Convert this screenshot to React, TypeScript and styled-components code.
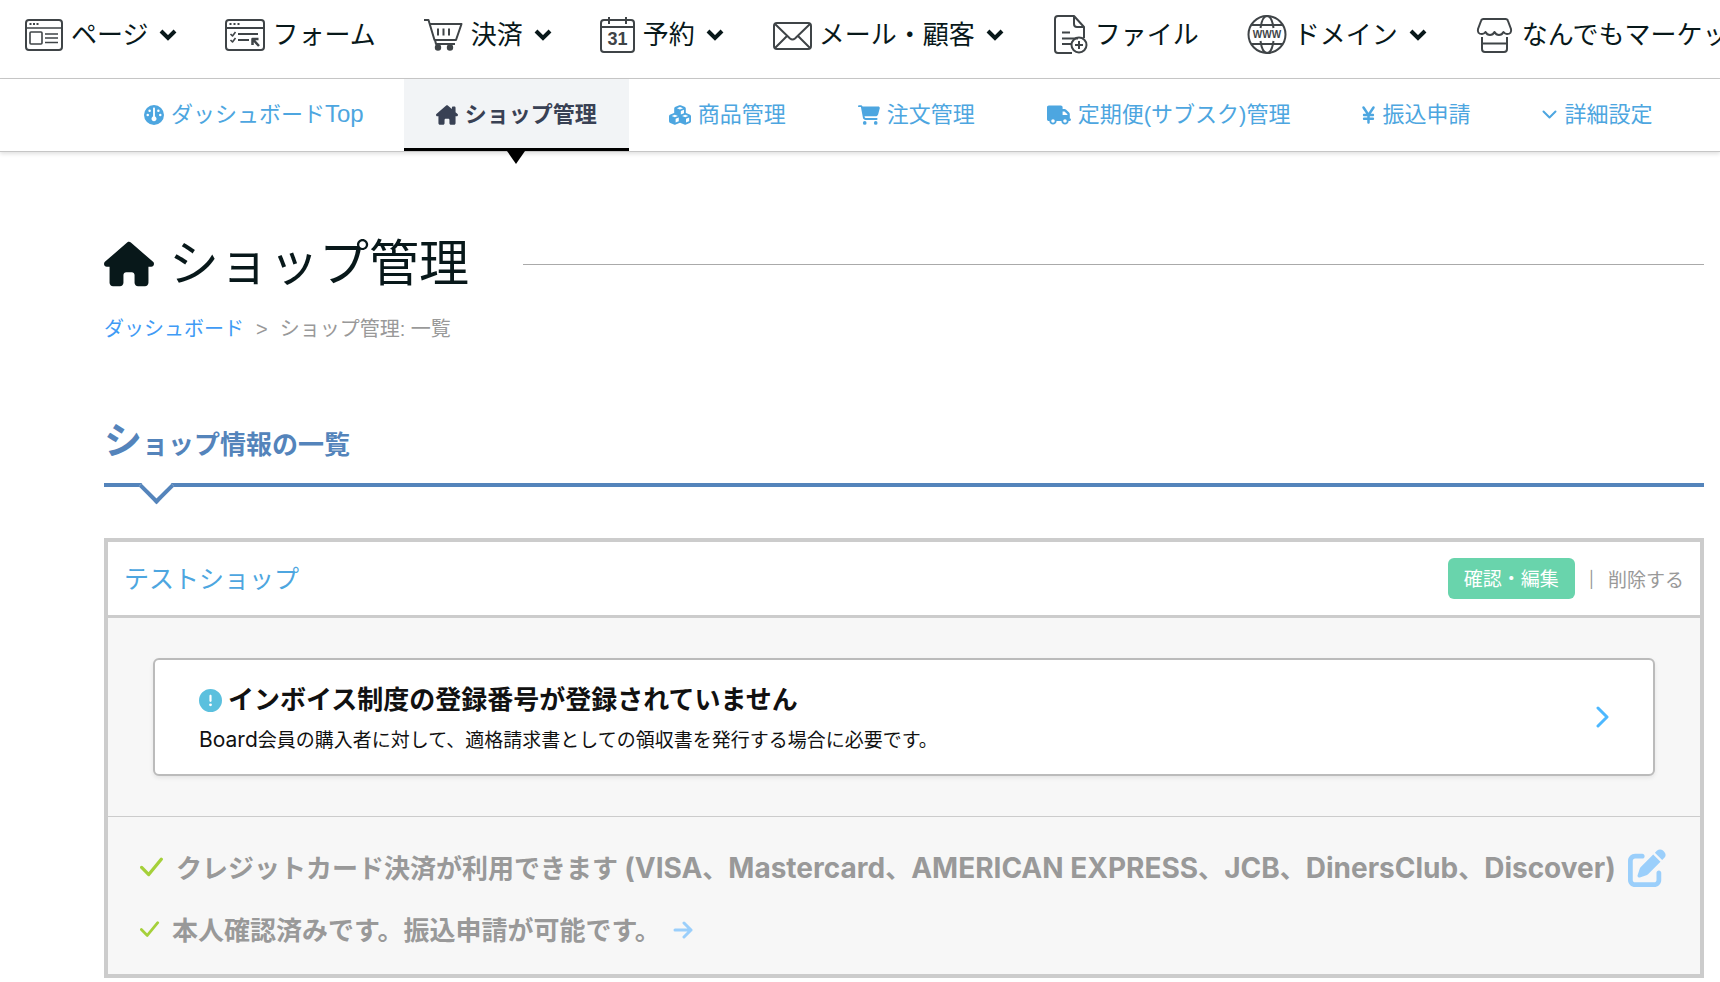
import React from 'react';
import styled, { createGlobalStyle, css } from 'styled-components';
import {
  FaCartShopping, FaCircleExclamation, FaCubes, FaGauge, FaHouse, FaHouseChimney, FaPenToSquare, FaTruck, FaYenSign,
} from 'react-icons/fa6';

const color = {
  ink: '#08181a',
  link: '#4da6e0',
  crumb: '#3f9bf5',
  heading: '#5484bb',
  muted: '#999',
  line: '#ccc',
  pale: '#9bcffb',
};

const Global = createGlobalStyle`
  *, *::before, *::after { box-sizing: border-box; }
  body {
    margin: 0; background: #fff; color: ${color.ink}; overflow-x: hidden;
    font-family: "Liberation Sans", "Noto Sans CJK JP", sans-serif;
  }
  a { text-decoration: none; color: inherit; }
  h1, h2, h3, p, ul { margin: 0; padding: 0; }
  ul { list-style: none; }
  svg { flex: none; display: block; }
`;

const MainNav = styled.nav`
  border-bottom: 1px solid #c8c8c8;
  overflow: hidden;
`;

const MainList = styled.ul`
  display: flex;
  gap: 48px;
  height: 78px;
  padding: 0 0 8px 24px;
`;

const MainLink = styled.a`
  display: flex;
  align-items: center;
  height: 100%;
  gap: 7px;
  font-size: 26px;
  white-space: nowrap;
`;

const Label = styled.span`
  padding-bottom: 5px;
`;

const Latin = styled.span<{ $size: number }>`
  font-size: ${p => p.$size}px;
  line-height: 1;
`;

const MainIcon = styled.svg`
  height: 44px;
  fill: none;
  stroke: #3f4447;
  stroke-width: 2;
  stroke-linejoin: round;

  text {
    fill: #3f4447;
    stroke: none;
    font-weight: 700;
    text-anchor: middle;
  }
`;

const Caret = styled.svg`
  width: 18px;
  height: 14px;
  margin-left: 4px;
  fill: none;
  stroke: ${color.ink};
  stroke-width: 4;
`;

const SubNav = styled.nav`
  border-bottom: 1px solid #c6c6c6;
  box-shadow: 0 2px 4px rgba(0, 0, 0, 0.12);
`;

const SubList = styled.ul`
  display: flex;
  gap: 8px;
  padding-left: 112px;
`;

const Tab = styled.a<{ $active?: boolean }>`
  position: relative;
  display: flex;
  align-items: center;
  gap: 7px;
  height: 72px;
  padding: 2px 32px 0;
  border-bottom: 3px solid transparent;
  font-size: 22px;
  color: ${color.link};
  white-space: nowrap;

  ${p => p.$active && css`
    font-weight: 700;
    color: #394154;
    background: #f2f4f6;
    border-bottom-color: #000;

    &::after {
      content: '';
      position: absolute;
      top: 72px;
      left: 50%;
      margin-left: -9px;
      border: 9px solid transparent;
      border-top: 13px solid #000;
      border-bottom: 0;
    }
  `}
`;

const YenIcon = styled(FaYenSign)`
  width: 13px;
  height: 20px;
`;

const Main = styled.main`
  padding: 82px 16px 4px 104px;
`;

const TitleRow = styled.div`
  display: flex;
  align-items: center;
  gap: 54px;
`;

const Title = styled.h1`
  display: flex;
  align-items: center;
  gap: 15px;
  font-size: 50px;
  font-weight: 400;
  line-height: 60px;
  white-space: nowrap;
`;

const Rule = styled.span`
  flex: 1;
  height: 1px;
  background: #aaa;
`;

const Crumbs = styled.nav`
  display: flex;
  gap: 12px;
  margin-top: 20px;
  font-size: 20px;
  line-height: 30px;
  color: ${color.muted};

  a { color: ${color.crumb}; }
`;

const Section = styled.h2`
  position: relative;
  height: 76px;
  margin-top: 67px;
  border-bottom: 4px solid ${color.heading};
  color: ${color.heading};
  font-size: 26px;
  line-height: 60px;
  font-weight: 700;

  &::first-letter { font-size: 38px; }

  &::after {
    content: '';
    position: absolute;
    left: 40px;
    top: 63px;
    width: 25px;
    height: 25px;
    transform: rotate(45deg);
    border: solid ${color.heading};
    border-width: 0 4px 4px 0;
    background: #fff;
  }
`;

const Card = styled.article`
  margin-top: 51px;
  border: 4px solid ${color.line};
  background: #f7f7f7;
  font-family: Inter, "Noto Sans CJK JP", sans-serif;
`;

const CardHead = styled.header`
  display: flex;
  align-items: center;
  height: 76px;
  padding: 0 16px;
  border-bottom: 3px solid ${color.line};
  background: #fff;
  font-size: 19px;
  color: ${color.muted};
`;

const ShopLink = styled.a`
  margin-right: auto;
  padding-bottom: 4px;
  font-size: 25px;
  color: ${color.link};
`;

const EditButton = styled.button`
  height: 41px;
  padding: 0 16px 2px;
  border: 0;
  border-radius: 6px;
  background: #69d4ac;
  color: #fff;
  font: inherit;
  cursor: pointer;
`;

const DeleteButton = styled.button`
  padding: 0;
  border: 0;
  background: none;
  color: inherit;
  font: inherit;
  cursor: pointer;
`;

const Bar = styled.span`
  margin: 0 14px;
  font-size: 16px;
`;

const AlertArea = styled.div`
  padding: 40px 45px;
  border-bottom: 1px solid ${color.line};
`;

const Alert = styled.a`
  display: flex;
  align-items: center;
  justify-content: space-between;
  height: 118px;
  padding: 0 44px;
  border: 2px solid #bbb;
  border-radius: 6px;
  background: #fff;
  box-shadow: 0 2px 4px rgba(0, 0, 0, 0.08);
  color: #111;
`;

const AlertBody = styled.div`
  padding-top: 8px;
`;

const AlertTitle = styled.h3`
  display: flex;
  align-items: center;
  gap: 6px;
  font-size: 26px;
  line-height: 40px;
`;

const AlertText = styled.p`
  font-size: 19px;
  line-height: 42px;
`;

const Status = styled.ul`
  padding: 20px 32px 13px;
  color: ${color.muted};
  font-size: 26px;
  font-weight: 700;
`;

const StatusRow = styled.li`
  display: flex;
  align-items: center;
  gap: 12px;
  height: 62px;
  white-space: nowrap;

  a { color: ${color.pale}; }
`;

const StatusText = styled.span`
  padding-bottom: 4px;
`;

const Stroke = styled.svg<{ $color?: string; $weight?: number }>`
  fill: none;
  stroke: ${p => p.$color ?? 'currentColor'};
  stroke-width: ${p => p.$weight ?? 3};
  stroke-linecap: round;
  stroke-linejoin: round;
`;

const Check = ({ size }: { size: number }) => (
  <Stroke width={size} height={size} viewBox="0 0 22 22" $color="#a5d03a">
    <path d="M1.5 10.5 8 17 19.500 3" />
  </Stroke>
);

type MainEntry = { label: string; menu?: boolean; width: number; icon: React.ReactNode };

const mainItems: MainEntry[] = [
  {
    label: 'ページ', menu: true, width: 40,
    icon: <>
      <rect x="2" y="7" width="36" height="30" rx="3" />
      <path d="M2 15h36M21 21h13M21 25h13M21 29.500h13" strokeWidth="1.700" />
      <path d="M5.500 11h2M9 11h2M12.500 11h2" />
      <rect x="6" y="19" width="12" height="12" rx="1" strokeWidth="1.600" />
    </>,
  },
  {
    label: 'フォーム', menu: false, width: 40,
    icon: <>
      <rect x="1" y="7" width="38" height="30" rx="3" />
      <path d="M1 15h38M13 21h20M13 27h11" />
      <path d="M4.500 11h2M8.500 11h2M12.500 11h2" />
      <path d="M5.500 21l2 2 3-4M5.500 27l2 2 3-4" strokeWidth="1.600" />
      <path d="M27.500 32v-6h6M28 26.500l6 6.500" strokeWidth="2.500" />
    </>,
  },
  {
    label: '決済', menu: true, width: 40,
    icon: <>
      <path d="M0 7h4.500l6 20H32l5.500-16H6M11 27l1 4h19M14 15.500v7M19.500 15.500v7M25 15.500v7" />
      <circle cx="14" cy="34.500" r="2.200" fill="#3f4447" />
      <circle cx="26" cy="34.500" r="2.200" fill="#3f4447" />
    </>,
  },
  {
    label: '予約', menu: true, width: 36,
    icon: <>
      <rect x="1" y="7" width="33" height="32" rx="3" />
      <path d="M1 14h33M9 4v7M26 4v7" />
      <text x="17.500" y="32" fontSize="18">31</text>
    </>,
  },
  {
    label: 'メール・顧客', menu: true, width: 40,
    icon: <>
      <rect x="2" y="10" width="37" height="26" rx="3" />
      <path d="M3 11l15 14.500q2.500 2 5 0L38 11M3 35l12-12M38 35L26 23" />
    </>,
  },
  {
    label: 'ファイル', width: 36,
    icon: <>
      <path d="M20 40H6q-3 0-3-3V6q0-3 3-3h16l10 11v11M22 3v8q0 3 3 3h7M10 19.500h8M10 25.500h16M10 31h9" />
      <circle cx="27" cy="32" r="7.500" />
      <path d="M27 28v8M23 32h8" />
    </>,
  },
  {
    label: 'ドメイン', menu: true, width: 40,
    icon: <>
      <circle cx="20" cy="21.500" r="18.500" />
      <path d="M4.500 12h31M4.500 31h31" />
      <path d="M13.500 15c1-7 3.500-12 6.500-12s5.500 5 6.500 12M13.500 28c1 7 3.500 12 6.500 12s5.500-5 6.500-12" />
      <text x="20" y="25" fontSize="10">WWW</text>
    </>,
  },
  {
    label: 'なんでもマーケット', width: 40,
    icon: <>
      <path d="M8.500 6h22q2 0 2.500 2l3 8q1 5-4 5-2 0-3.500-2-1.500 3-4.500 3t-4.500-3q-1.500 3-4.500 3t-4.500-3q-1.500 2-3.500 2-5 0-4-5l3-8q.5-2 2.500-2z" />
      <path d="M7 24v12q0 3 3 3h19q3 0 3-3V24M7 30.500h25" />
    </>,
  },
];

const tabs: { label: React.ReactNode; icon: React.ReactNode; active?: boolean }[] = [
  { label: <>ダッシュボード<Latin $size={24}>Top</Latin></>, icon: <FaGauge size={20} /> },
  { label: 'ショップ管理', icon: <FaHouseChimney size={22} />, active: true },
  { label: '商品管理', icon: <FaCubes size={22} /> },
  { label: '注文管理', icon: <FaCartShopping size={22} /> },
  { label: '定期便(サブスク)管理', icon: <FaTruck size={24} /> },
  { label: '振込申請', icon: <YenIcon /> },
  {
    label: '詳細設定',
    icon: <Stroke width="15" height="10" viewBox="0 0 15 10" $weight={2}><path d="M1.500 1.500l6 6 6-6" /></Stroke>,
  },
];

const brands = ['(VISA', 'Mastercard', 'AMERICAN EXPRESS', 'JCB', 'DinersClub', 'Discover)'];

export default function App() {
  return (
    <>
      <Global />
      <MainNav>
        <MainList>
          {mainItems.map(item => (
            <li key={item.label}>
              <MainLink href="#">
                <MainIcon width={item.width} viewBox={`0 0 ${item.width} 44`}>{item.icon}</MainIcon>
                <Label>{item.label}</Label>
                {item.menu && <Caret viewBox="0 0 18 14"><path d="M2 3l7 7 7-7" /></Caret>}
              </MainLink>
            </li>
          ))}
        </MainList>
      </MainNav>
      <SubNav>
        <SubList>
          {tabs.map((tab, i) => (
            <li key={i}>
              <Tab href="#" $active={tab.active}>{tab.icon}<Label>{tab.label}</Label></Tab>
            </li>
          ))}
        </SubList>
      </SubNav>
      <Main>
        <TitleRow>
          <Title><FaHouse size={50} />ショップ管理</Title>
          <Rule />
        </TitleRow>
        <Crumbs>
          <a href="#">ダッシュボード</a>
          <span>&gt;</span>
          <span>ショップ管理: 一覧</span>
        </Crumbs>
        <Section>ショップ情報の一覧</Section>
        <Card>
          <CardHead>
            <ShopLink href="#">テストショップ</ShopLink>
            <EditButton type="button">確認・編集</EditButton>
            <Bar>|</Bar>
            <DeleteButton type="button">削除する</DeleteButton>
          </CardHead>
          <AlertArea>
            <Alert href="#">
              <AlertBody>
                <AlertTitle>
                  <FaCircleExclamation size={23} color="#5bc0de" />
                  インボイス制度の登録番号が登録されていません
                </AlertTitle>
                <AlertText>
                  <Latin $size={21}>Board</Latin>会員の購入者に対して、適格請求書としての領収書を発行する場合に必要です。
                </AlertText>
              </AlertBody>
              <Stroke width="14" height="22" viewBox="0 0 14 22" $color="#4db8ff">
                <path d="M3 2l9 9-9 9" />
              </Stroke>
            </Alert>
          </AlertArea>
          <Status>
            <StatusRow>
              <Check size={24} />
              <StatusText>
                クレジットカード決済が利用できます{' '}
                {brands.map((brand, i) => (
                  <React.Fragment key={brand}>{i > 0 && '、'}<Latin $size={28}>{brand}</Latin></React.Fragment>
                ))}
              </StatusText>
              <a href="#" aria-label="編集"><FaPenToSquare size={38} /></a>
            </StatusRow>
            <StatusRow>
              <Check size={20} />
              <StatusText>本人確認済みです。振込申請が可能です。</StatusText>
              <a href="#" aria-label="振込申請へ">
                <Stroke width="20" height="20" viewBox="0 0 20 20"><path d="M2 10h16M11 3l7 7-7 7" /></Stroke>
              </a>
            </StatusRow>
          </Status>
        </Card>
      </Main>
    </>
  );
}
